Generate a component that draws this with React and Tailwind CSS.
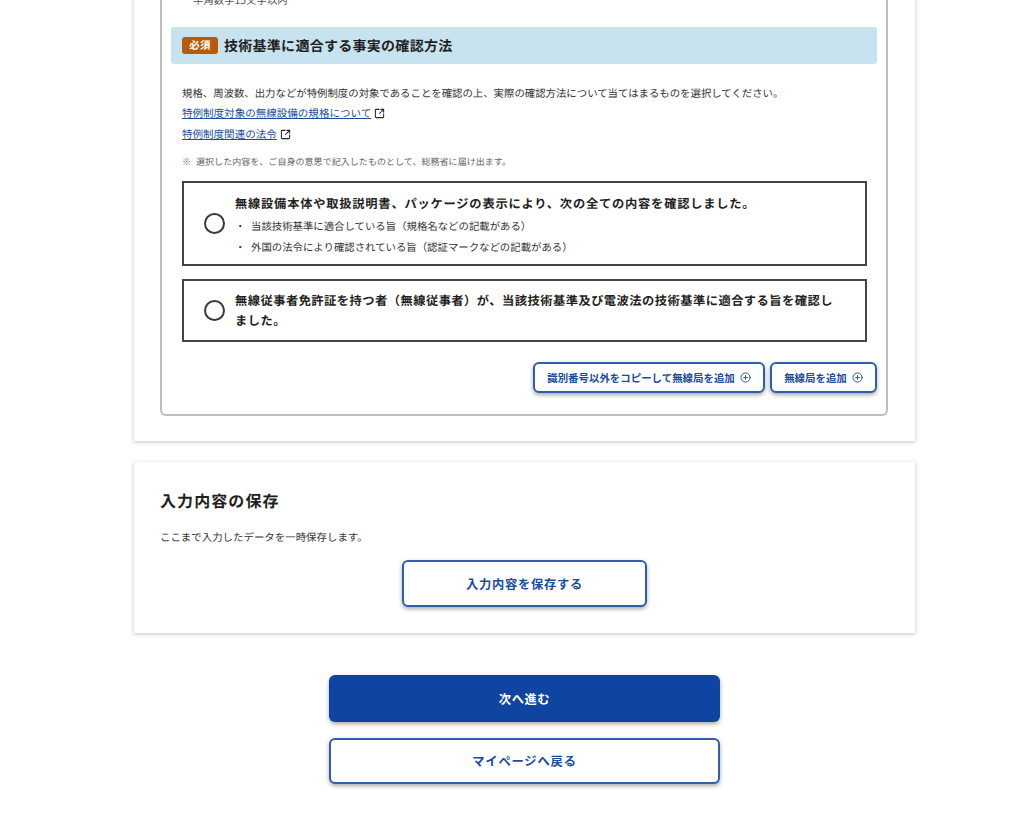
import { CirclePlus, SquareArrowOutUpRight } from 'lucide-react'

const fontStack = { fontFamily: '"Noto Sans CJK JP", "Noto Sans", sans-serif' }

const OutlineButton = ({ className, children }) => (
  <button className={`flex items-center justify-center bg-white border-2 border-[#2f5eac] rounded-md font-bold text-[#1a4ba0] shadow-[0_2px_4px_rgba(0,0,0,0.35)] ${className}`}>
    {children}
  </button>
)

const RadioCircle = () => (
  <span className="w-[21px] h-[21px] shrink-0 rounded-full border-2 border-[#3a3a3a] bg-white" />
)

const App = () => {
  return (
    <div style={fontStack} className="h-[815px] overflow-hidden bg-white text-[#1f1f22] [text-rendering:geometricPrecision]">
      <div className="w-[781px] ml-[134px] bg-white shadow-[0_1px_4px_rgba(0,0,0,0.25)] pl-[26px] pr-[27px] pb-[25px] mt-[-13px]">
        <div className="border-2 border-t-0 border-[#bdbdbd] rounded-b-md px-[9px] pb-[21px]">
          <p className="pl-[22px] text-[10.4px] leading-[25px] text-[#555]">半角数字15文字以内</p>

          <h3 className="mt-[15px] h-[37px] flex items-center gap-[6px] bg-[#c8e3f0] rounded-[3px] px-[11px] text-[14px] font-bold tracking-[0.02em]">
            <span className="w-[36px] h-[17px] flex items-center justify-center bg-[#b85a06] rounded-[3px] text-[10.5px] text-white">必須</span>
            <span className="pt-[2px]">技術基準に適合する事実の確認方法</span>
          </h3>

          <div className="pl-[11px] pr-[10px]">
            <p className="mt-[18px] text-[10.4px] leading-[21px] text-[#333]">
              規格、周波数、出力などが特例制度の対象であることを確認の上、実際の確認方法について当てはまるものを選択してください。
            </p>
            <a className="flex items-center gap-[3px] text-[10.54px] leading-[21px] text-[#1a4ba0]">
              <span className="underline">特例制度対象の無線設備の規格について</span>
              <SquareArrowOutUpRight size={11} strokeWidth={2.25} className="text-[#222]" />
            </a>
            <a className="flex items-center gap-[3px] text-[10.54px] leading-[21px] text-[#1a4ba0]">
              <span className="underline">特例制度関連の法令</span>
              <SquareArrowOutUpRight size={11} strokeWidth={2.25} className="text-[#222]" />
            </a>
            <p className="mt-[7px] flex text-[9.05px] leading-[20px] text-[#666]"><span className="w-[14px]">※</span>選択した内容を、ご自身の意思で記入したものとして、総務省に届け出ます。</p>

            <div className="mt-[9px] h-[85px] flex items-center gap-[10px] border-2 border-[#444] px-[20px]">
              <RadioCircle />
              <div className="pt-[2px]">
                <p className="text-[12.25px] leading-[20px] font-bold tracking-[0.064em]">無線設備本体や取扱説明書、パッケージの表示により、次の全ての内容を確認しました。</p>
                <ul className="mt-[2px] text-[10.4px] leading-[21px] text-[#333]">
                  <li className="flex"><span className="w-[16px]">・</span>当該技術基準に適合している旨（規格名などの記載がある）</li>
                  <li className="flex"><span className="w-[16px]">・</span>外国の法令により確認されている旨（認証マークなどの記載がある）</li>
                </ul>
              </div>
            </div>

            <div className="mt-[13px] h-[63px] flex items-center gap-[10px] border-2 border-[#444] px-[20px]">
              <RadioCircle />
              <p className="pb-[2px] text-[12.25px] leading-[20px] font-bold tracking-[0.039em]">無線従事者免許証を持つ者（無線従事者）が、当該技術基準及び電波法の技術基準に適合する旨を確認しました。</p>
            </div>
          </div>

          <div className="mt-[20px] flex justify-end gap-[5px]">
            <OutlineButton className="w-[232px] h-[31px] gap-[5px] text-[10.45px]">
              識別番号以外をコピーして無線局を追加
              <CirclePlus size={11} strokeWidth={2} />
            </OutlineButton>
            <OutlineButton className="w-[107px] h-[31px] gap-[5px] text-[10.45px]">
              無線局を追加
              <CirclePlus size={11} strokeWidth={2} />
            </OutlineButton>
          </div>
        </div>
      </div>

      <div className="w-[781px] h-[171px] ml-[134px] mt-[21px] bg-white shadow-[0_1px_4px_rgba(0,0,0,0.25)] px-[26px] pt-[26px]">
        <h2 className="text-[16px] leading-[24px] font-bold tracking-[0.068em]">入力内容の保存</h2>
        <p className="mt-[16px] text-[10.45px] leading-[20px] text-[#333]">ここまで入力したデータを一時保存します。</p>
        <div className="mt-[12px] flex justify-center">
          <OutlineButton className="w-[245px] h-[47px] pt-[2px] text-[12.25px] tracking-[0.06em]">入力内容を保存する</OutlineButton>
        </div>
      </div>

      <div className="mt-[42px] flex flex-col items-center gap-[16px] pl-[25px]">
        <button className="w-[391px] h-[47px] pt-[2px] bg-[#0f44a0] rounded-md font-bold text-white text-[12.25px] tracking-[0.05em] shadow-[0_2px_4px_rgba(0,0,0,0.35)]">次へ進む</button>
        <OutlineButton className="w-[391px] h-[46px] text-[12.25px] tracking-[0.07em]">マイページへ戻る</OutlineButton>
      </div>
    </div>
  )
}

export default App
